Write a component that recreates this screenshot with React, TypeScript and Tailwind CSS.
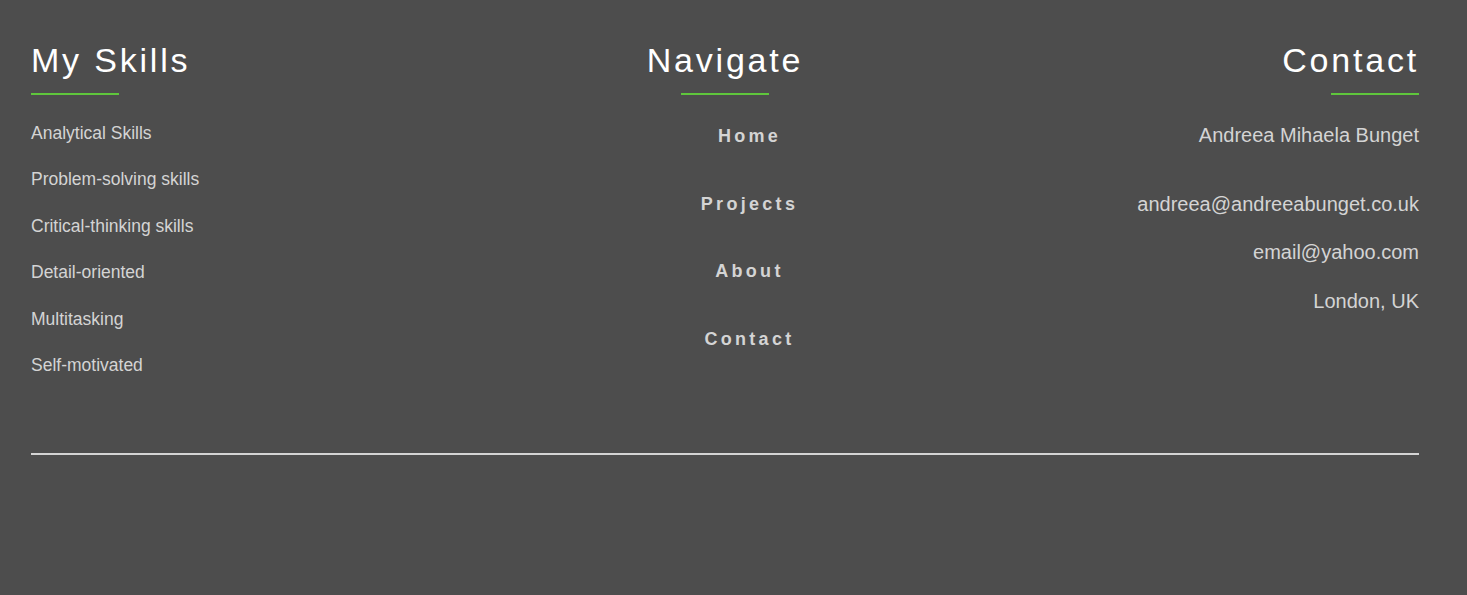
import React from 'react'

const skills = [
  'Analytical Skills',
  'Problem-solving skills',
  'Critical-thinking skills',
  'Detail-oriented',
  'Multitasking',
  'Self-motivated',
]

const links = ['Home', 'Projects', 'About', 'Contact']

// ─── Column heading with green underline ─────────────────────────────────────
function Heading({ title, align }: { title: string; align: 'start' | 'center' | 'end' }) {
  const alignCls =
    align === 'start' ? 'items-start' : align === 'center' ? 'items-center' : 'items-end'
  return (
    <div className={`flex flex-col ${alignCls}`}>
      <h2 className="text-[34px] leading-[40px] tracking-[2.8px] text-white font-normal">
        {title}
      </h2>
      <div className="mt-[13px] h-[2px] w-[88px] bg-[#5fc63c]" />
    </div>
  )
}

export default function App() {
  return (
    <footer
      className="min-h-screen bg-[#4d4d4d] pl-[31px] pr-[48px] pt-[40px]"
      style={{ fontFamily: '"Liberation Sans", Arial, sans-serif' }}
    >
      <div className="grid grid-cols-3 items-start">
        {/* Skills */}
        <div className="flex flex-col items-start">
          <Heading title="My Skills" align="start" />
          <ul className="mt-[15px]">
            {skills.map((s) => (
              <li key={s} className="text-[17.5px] leading-[46.4px] text-[#d4d4d4]">
                {s}
              </li>
            ))}
          </ul>
        </div>

        {/* Navigate */}
        <div className="flex flex-col items-center">
          <Heading title="Navigate" align="center" />
          <ul className="mt-[8px] pl-[49px] flex flex-col items-center">
            {links.map((l) => (
              <li
                key={l}
                className="text-[18px] leading-[67.7px] font-bold tracking-[3.3px] text-[#d4d4d4]"
              >
                {l}
              </li>
            ))}
          </ul>
        </div>

        {/* Contact */}
        <div className="flex flex-col items-end">
          <Heading title="Contact" align="end" />
          <div className="mt-[16px] flex flex-col items-end text-[20px] leading-[48.5px] text-[#d4d4d4]">
            <p className="mb-[20px]">Andreea Mihaela Bunget</p>
            <p>andreea@andreeabunget.co.uk</p>
            <p>email@yahoo.com</p>
            <p>London, UK</p>
          </div>
        </div>
      </div>

      <div className="mt-[64.6px] h-[2px] bg-[#d4d4d4]" />
    </footer>
  )
}
